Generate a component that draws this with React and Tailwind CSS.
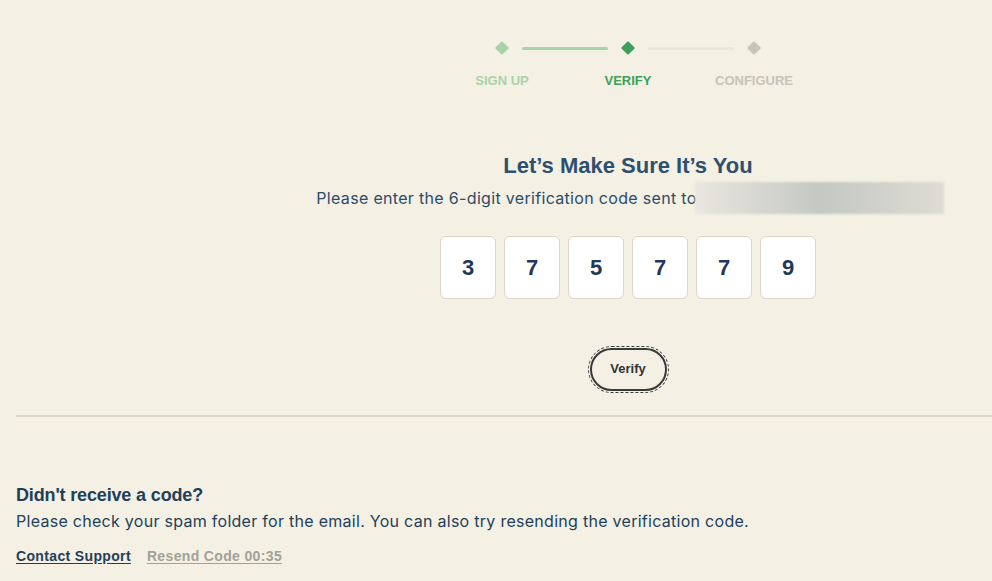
import React from "react";

const steps = [
  { label: "SIGN UP", text: "text-[#a9d3a9]" },
  { label: "VERIFY", text: "text-[#3f9f5a]" },
  { label: "CONFIGURE", text: "text-[#c7c4b8]" },
];

const code = ["3", "7", "5", "7", "7", "9"];

const App = () => {
  return (
    <div
      className="min-h-screen w-full bg-[#f4f0e3] text-[#2b4c6b]"
      style={{ fontFamily: '"Liberation Sans", Arial, sans-serif' }}
    >
      <div className="flex">
        <div className="w-[264px] shrink-0" />
        <div className="flex flex-1 flex-col items-center">
          {/* stepper */}
          <div className="mt-[43px] flex items-center">
            <div className="h-[10px] w-[10px] rotate-45 rounded-[1px] bg-[#a9d3a9]" />
            <div className="mx-[15px] h-[3px] w-[86px] rounded-full bg-[#a9d3a9]" />
            <div className="h-[10px] w-[10px] rotate-45 rounded-[1px] bg-[#3f9f5a]" />
            <div className="mx-[15px] h-[3px] w-[86px] rounded-full bg-[#ebe6da]" />
            <div className="h-[10px] w-[10px] rotate-45 rounded-[1px] bg-[#c7c4b8]" />
          </div>
          <div className="mt-[18px] flex">
            {steps.map((s) => (
              <div
                key={s.label}
                className={`w-[126px] text-center text-[13px] font-bold ${s.text}`}
              >
                {s.label}
              </div>
            ))}
          </div>

          <h1 className="mt-[58px] text-[22px] font-bold text-[#2e5070]">
            Let’s Make Sure It’s You
          </h1>
          <div
            className="flex items-center pl-[4px] text-[16px] tracking-[0.32px] text-[#2b4c6b]"
            style={{ fontFamily: "Inter, sans-serif" }}
          >
            <span>Please enter the 6-digit verification code sent to</span>
            <span className="-ml-[2px] h-[32px] w-[249px] bg-gradient-to-r from-[#e9e7df] via-[#c5c8c3] to-[#dedcd4] blur-[1px]" />
          </div>

          <div className="mt-[22px] flex gap-[8px]">
            {code.map((d, i) => (
              <div
                key={i}
                className="flex h-[63px] w-[56px] items-center justify-center rounded-[6px] border border-[#ddd5c6] bg-white text-[22px] font-bold text-[#1e3a55]"
              >
                {d}
              </div>
            ))}
          </div>

          <button
            type="button"
            className="mt-[49px] h-[43px] w-[77px] rounded-full border-2 border-[#3a3a3a] text-[13px] font-bold text-[#333] outline outline-1 outline-offset-[1px] outline-dashed outline-[#3a3a3a]"
          >
            Verify
          </button>
        </div>
      </div>

      <div className="ml-[16px] mt-[24px] h-[2px] bg-[#ddd8c9]" />

      <div className="px-[16px] pt-[66px]">
        <h2 className="text-[18px] font-bold leading-[24px] tracking-[-0.15px] text-[#223f5a]">
          Didn't receive a code?
        </h2>
        <p
          className="mt-[3px] text-[16px] leading-[22px] tracking-[0.28px] text-[#223f5a]"
          style={{ fontFamily: "Inter, sans-serif" }}
        >
          Please check your spam folder for the email. You can also try resending the verification code.
        </p>
        <div className="mt-[14px] flex gap-[16px] text-[14px] font-bold tracking-[0.35px]">
          <a className="cursor-pointer text-[#223f5a] underline underline-offset-2">Contact Support</a>
          <a className="cursor-pointer text-[#a3a19a] underline underline-offset-2">Resend Code 00:35</a>
        </div>
      </div>
    </div>
  );
};

export default App;
